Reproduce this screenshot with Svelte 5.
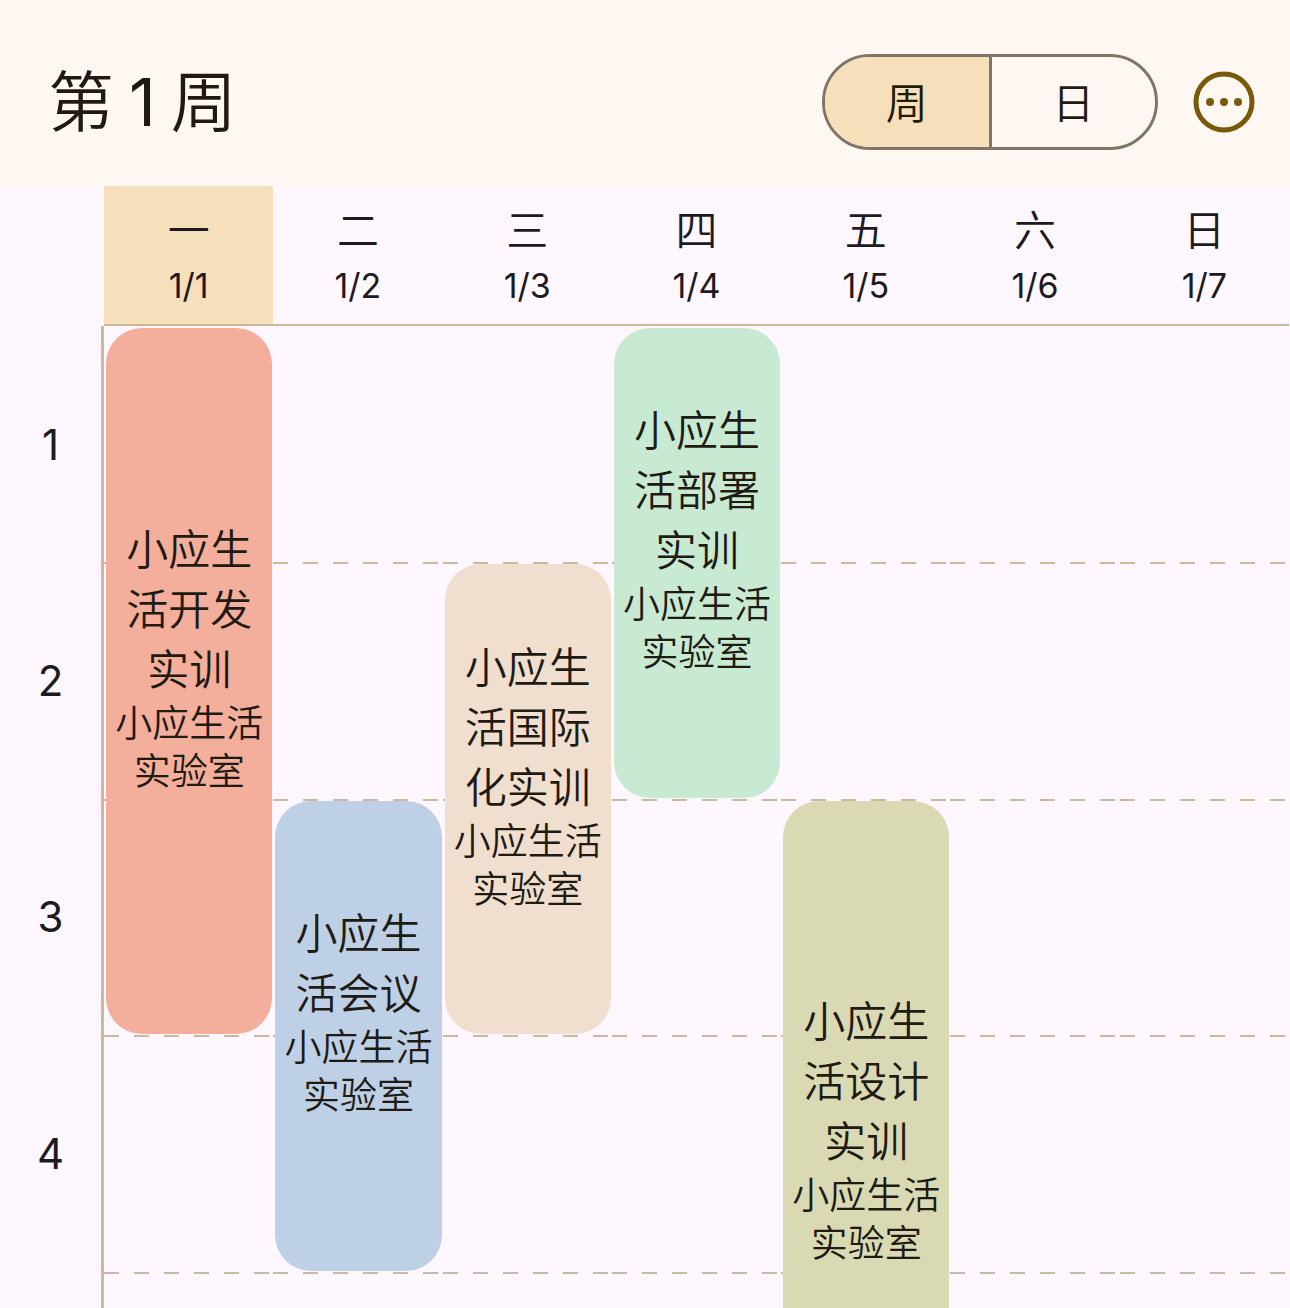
<script>
  const views = ['周', '日'];
  let view = $state('周');

  const days = ['一', '二', '三', '四', '五', '六', '日'].map((name, i) => ({
    name,
    date: `1/${i + 1}`,
  }));
  const today = 0;
  const periods = [1, 2, 3, 4, 5];

  const room = '小应生活实验室';
  const courses = [
    { name: '小应生活开发实训', day: 1, start: 1, span: 3, tone: 'coral' },
    { name: '小应生活会议', day: 2, start: 3, span: 2, tone: 'blue' },
    { name: '小应生活国际化实训', day: 3, start: 2, span: 2, tone: 'sand' },
    { name: '小应生活部署实训', day: 4, start: 1, span: 2, tone: 'mint' },
    { name: '小应生活设计实训', day: 5, start: 3, span: 3, tone: 'olive' },
  ];
</script>

<div class="screen">
  <header class="bar">
    <h1><span>第</span><span class="number">1</span><span>周</span></h1>
    <div class="segmented" role="group" aria-label="视图">
      {#each views as v}
        <button type="button" aria-pressed={view === v} onclick={() => (view = v)}>{v}</button>
      {/each}
    </div>
    <button class="more" type="button" aria-label="更多">
      <svg viewBox="0 0 62 62" aria-hidden="true">
        <circle cx="31" cy="31" r="28" fill="none" stroke="currentColor" stroke-width="5" />
        <circle cx="17" cy="31" r="4" fill="currentColor" />
        <circle cx="31" cy="31" r="4" fill="currentColor" />
        <circle cx="45" cy="31" r="4" fill="currentColor" />
      </svg>
    </button>
  </header>

  <div class="days">
    {#each days as day, i}
      <div class="day" class:today={i === today}>
        <span class="name">{day.name}</span>
        <span class="date">{day.date}</span>
      </div>
    {/each}
  </div>

  <main class="scroller">
    <div class="board">
      <div class="periods">
        {#each periods as p}
          <span>{p}</span>
        {/each}
      </div>
      <div class="grid">
        {#each periods as p}
          {#each days as day, i}
            <div class="cell" class:ruled={p > 1} style:grid-area="{p} / {i + 1}"></div>
          {/each}
        {/each}
        {#each courses as c}
          <article
            class="course {c.tone}"
            style:grid-column={c.day}
            style:grid-row="{c.start} / span {c.span}"
          >
            <h2>{c.name}</h2>
            <p>{room}</p>
          </article>
        {/each}
      </div>
    </div>
  </main>
</div>

<style>
  :global(body) {
    margin: 0;
    background: #fef7ff;
  }

  .screen {
    display: flex;
    flex-direction: column;
    height: 100vh;
    overflow: hidden;
    background: #fef7ff;
    color: #1d1b20;
    font-family: Inter, 'Noto Sans CJK SC', sans-serif;
    font-weight: 350;
  }

  .bar {
    display: flex;
    flex: none;
    align-items: center;
    padding: 54px 35px 36px 48px;
    background: #fff8f2;
    color: #1f1b13;
  }

  h1 {
    display: flex;
    gap: 15px;
    margin: 0 auto 0 0;
    font-size: 66px;
    font-weight: 350;
    line-height: 84px;
  }

  .number {
    font-weight: 400;
  }

  .segmented {
    display: flex;
    box-sizing: border-box;
    width: 336px;
    height: 96px;
    margin-right: 35px;
    overflow: hidden;
    border: 3px solid #7f7667;
    border-radius: 48px;
  }

  .segmented button {
    flex: 1;
    padding: 0 0 4px;
    border: 0;
    background: transparent;
    color: #1f1b13;
    font: inherit;
    font-size: 42px;
  }

  .segmented button + button {
    border-left: 3px solid #7f7667;
  }

  .segmented button[aria-pressed='true'] {
    background: #f6e0bb;
    color: #251a00;
  }

  .more {
    display: flex;
    padding: 0;
    border: 0;
    background: none;
    color: #785a0b;
  }

  .more svg {
    width: 62px;
    height: 62px;
  }

  .days {
    display: grid;
    flex: none;
    grid-template-columns: repeat(7, 1fr);
    margin: 0 1px 0 104px;
    border-bottom: 2px solid #cab99c;
  }

  .day {
    display: flex;
    flex-direction: column;
    align-items: center;
    padding: 15px 0;
  }

  .day.today {
    background: #f5e0bb;
  }

  .name {
    font-size: 42px;
    line-height: 60px;
  }

  .date {
    font-size: 34px;
    font-weight: 400;
    line-height: 50px;
  }

  .day {
    padding-bottom: 13px;
  }

  .scroller {
    flex: 1;
    min-height: 0;
    overflow-y: auto;
    scrollbar-width: none;
  }

  .board {
    display: flex;
    height: 1182px;
    padding-right: 1px;
  }

  .periods {
    display: grid;
    box-sizing: border-box;
    flex: none;
    grid-template-rows: repeat(5, 1fr);
    width: 104px;
    border-right: 3px solid #cab99c;
    font-size: 42px;
    font-weight: 400;
  }

  .periods span {
    display: grid;
    place-items: center;
  }

  .grid {
    display: grid;
    flex: 1;
    grid-template-rows: repeat(5, 1fr);
    grid-template-columns: repeat(7, 1fr);
  }

  .cell.ruled {
    background: repeating-linear-gradient(90deg, #cab99c 0 15px, transparent 15px 30px) top / 100% 2px
      no-repeat;
  }

  .course {
    display: flex;
    flex-direction: column;
    justify-content: center;
    margin: 2px 1px 1px 2px;
    padding: 0 6px 47px;
    border-radius: 36px;
    color: #1f1b13;
    text-align: center;
  }

  .course h2 {
    margin: 0;
    padding: 0 12px;
    font-size: 42px;
    font-weight: 350;
    line-height: 60px;
  }

  .course p {
    margin: 0;
    font-size: 37px;
    line-height: 48px;
  }

  .coral {
    background: #f4ae9c;
  }

  .blue {
    background: #bed0e6;
  }

  .sand {
    background: #f0dece;
  }

  .mint {
    background: #c8ead3;
  }

  .olive {
    background: #d9dab4;
  }
</style>
